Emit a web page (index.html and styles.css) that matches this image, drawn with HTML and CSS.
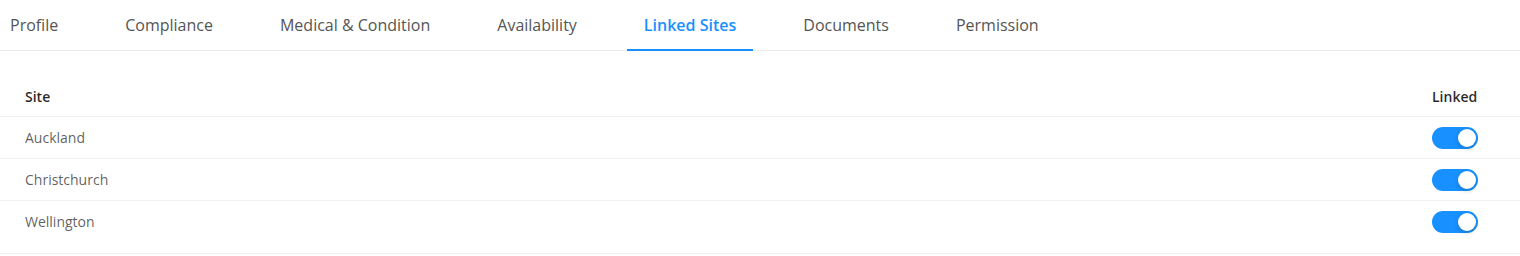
FILE: index.html
```html
<!DOCTYPE html>
<html lang="en">

<head>
    <meta charset="UTF-8">
    <meta name="viewport" content="width=device-width, initial-scale=1.0">
    <title>Linked Sites</title>
    <link rel="stylesheet" href="styles.css">
</head>

<body>
    <div class="tabs">
        <div class="tab">Profile</div>
        <div class="tab">Compliance</div>
        <div class="tab">Medical &amp; Condition</div>
        <div class="tab">Availability</div>
        <div class="tab active">Linked Sites</div>
        <div class="tab">Documents</div>
        <div class="tab">Permission</div>
    </div>

    <div class="sites">
        <div class="row head">
            <div class="cell">Site</div>
            <div class="cell linked">Linked</div>
        </div>
        <div class="row">
            <div class="cell">Auckland</div>
            <div class="cell linked"><span class="switch on"></span></div>
        </div>
        <div class="row">
            <div class="cell">Christchurch</div>
            <div class="cell linked"><span class="switch on"></span></div>
        </div>
        <div class="row">
            <div class="cell">Wellington</div>
            <div class="cell linked"><span class="switch on"></span></div>
        </div>
    </div>
</body>

</html>
```

FILE: styles.css
```css
body {
    margin: 0;
    font-family: "Open Sans", "Noto Sans", sans-serif;
    color: rgba(0, 0, 0, 0.65);
    background: #fff;
}

.tabs {
    display: flex;
    gap: 33px;
    height: 50px;
    border-bottom: 1px solid #ebebeb;
}

.tabs .tab {
    position: relative;
    padding: 0 17px;
    line-height: 50px;
    font-size: 16px;
    color: #555;
    white-space: nowrap;
}

.tabs .tab:first-child {
    padding-left: 10px;
}

.tabs .tab.active {
    color: #1890ff;
    font-weight: 600;
}

.tabs .tab.active::after {
    content: "";
    position: absolute;
    left: 0;
    right: 0;
    bottom: -1px;
    height: 2px;
    background: #1890ff;
}

.sites {
    margin-top: 26px;
    padding-bottom: 11px;
    border-bottom: 1px solid #f0f0f0;
    font-size: 14px;
}

.sites .row {
    display: flex;
    align-items: center;
    height: 41px;
    border-bottom: 1px solid #f0f0f0;
}

.sites .row.head {
    height: 39px;
    font-weight: 600;
    color: rgba(0, 0, 0, 0.85);
}

.sites .row:last-child {
    border-bottom: none;
}

.sites .cell {
    flex: 1;
    padding: 0 25px;
}

.sites .cell.linked {
    flex: 0 0 104px;
    padding: 0 16px;
    box-sizing: border-box;
    display: flex;
    align-items: center;
}

.switch {
    display: inline-block;
    position: relative;
    width: 46px;
    height: 22px;
    border-radius: 11px;
    background: #bfbfbf;
}

.switch::after {
    content: "";
    position: absolute;
    top: 2px;
    left: 2px;
    width: 18px;
    height: 18px;
    border-radius: 50%;
    background: #fff;
    box-shadow: 0 2px 4px rgba(0, 35, 11, 0.2);
}

.switch.on {
    background: #1890ff;
}

.switch.on::after {
    left: 26px;
}
```
